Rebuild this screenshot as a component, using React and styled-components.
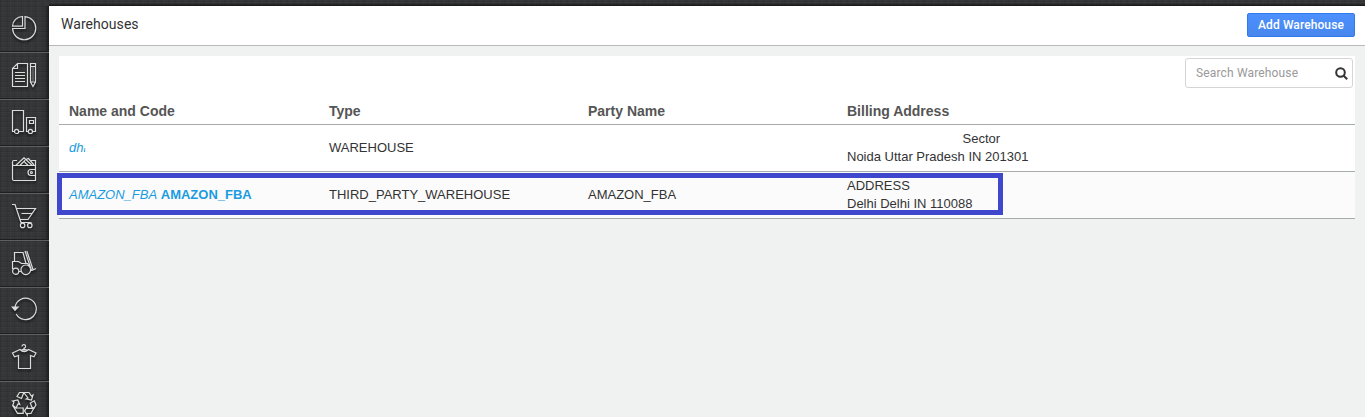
import React from 'react';
import styled, { createGlobalStyle } from 'styled-components';

const GlobalStyle = createGlobalStyle`
  * {
    box-sizing: border-box;
  }

  body {
    margin: 0;
    overflow: hidden;
    background: #f0f2f2;
    color: #333;
    font-family: 'Liberation Sans', Arial, sans-serif;
    font-size: 13px;
  }
`;

const Page = styled.div`
  display: flex;
  flex-direction: column;
  height: 100vh;
  background-color: #353637;
  background-image:
    repeating-linear-gradient(90deg, rgba(0, 0, 0, 0.07) 0 1px, transparent 1px 3px, rgba(255, 255, 255, 0.015) 3px 4px, transparent 4px 7px),
    repeating-linear-gradient(0deg, rgba(0, 0, 0, 0.07) 0 1px, transparent 1px 4px, rgba(255, 255, 255, 0.015) 4px 5px);
`;

const TopStrip = styled.div`
  flex: none;
  height: 6px;
  margin-left: 49px;
  background: linear-gradient(rgba(0, 0, 0, 0) 50%, rgba(0, 0, 0, 0.6));
`;

const Body = styled.div`
  display: flex;
  flex: 1;
  min-height: 0;
`;

const Sidebar = styled.nav`
  flex: none;
  width: 49px;
  overflow: hidden;
  box-shadow: inset -5px 0 4px -3px rgba(0, 0, 0, 0.55);
`;

const SideItem = styled.a`
  display: block;
  height: 47px;
  padding: 9px 0 0 11px;
  border-top: 1px solid ${({ $first }) => ($first ? 'transparent' : '#5e5f60')};
  border-bottom: 1px solid #1d1e1f;
  margin-top: ${({ $first }) => ($first ? '-1px' : '0')};
`;

const IconSvg = styled.svg`
  display: block;
  width: 26px;
  height: 26px;
  fill: none;
  stroke: #dcdcdc;
  stroke-width: 1.2;
  filter: drop-shadow(0 2px 1px rgba(0, 0, 0, 0.6));
`;

const Main = styled.main`
  display: flex;
  flex-direction: column;
  flex: 1;
  min-width: 0;
  background: #f0f2f2;
`;

const Header = styled.header`
  display: flex;
  align-items: center;
  justify-content: space-between;
  flex: none;
  height: 40px;
  padding: 0 10px 0 12px;
  background: #fff;
  border-bottom: 1px solid #b9b9b9;
`;

const Title = styled.h1`
  margin: 0 0 3px;
  font-family: Roboto, sans-serif;
  font-size: 14px;
  font-weight: 400;
  letter-spacing: 0.05px;
`;

const AddButton = styled.button`
  width: 108px;
  height: 24px;
  margin-bottom: 1px;
  padding: 0;
  border: 1px solid #3079ed;
  border-radius: 2px;
  background: linear-gradient(#4d90fe, #4787ed);
  color: #fff;
  font-family: Roboto, sans-serif;
  font-size: 12px;
  font-weight: 500;
  letter-spacing: 0.1px;
`;

const Panel = styled.section`
  margin: 10px 10px 0;
  background: #fff;
`;

const Toolbar = styled.div`
  display: flex;
  justify-content: flex-end;
  height: 42px;
  padding: 2px 2px 0 0;
`;

const SearchBox = styled.label`
  display: flex;
  align-items: center;
  justify-content: space-between;
  width: 168px;
  height: 30px;
  padding: 0 4px 0 10px;
  border: 1px solid #d5d5d5;
  border-radius: 3px;
  color: #999;
  font-family: Roboto, sans-serif;
  font-size: 12px;
  letter-spacing: 0.15px;
`;

const SearchSvg = styled.svg`
  width: 13px;
  height: 13px;
  fill: none;
  stroke: #333;
  stroke-width: 2;
`;

const Row = styled.div`
  display: grid;
  grid-template-columns: 260px 259px 259px 1fr;
  align-items: center;
  height: ${({ $head }) => ($head ? '27px' : '47px')};
  padding-left: 10px;
  border-bottom: 1px solid #a8abab;
  background: ${({ $alt }) => ($alt ? '#fbfbfb' : '#fff')};
  line-height: 18px;
`;

const HeadCell = styled.div`
  color: #555;
  font-size: 14px;
  font-weight: bold;
`;

const Cell = styled.div`
  white-space: pre;
`;

const AddressLine = styled.div`
  padding-left: ${({ $indent }) => $indent || 0}px;
`;

const Code = styled.a`
  color: #1a9be0;
  font-style: italic;
`;

const Name = styled.a`
  color: #1a9be0;
  font-weight: bold;
`;

const HalfLetter = styled.span`
  display: inline-block;
  clip-path: inset(9px 1px 0 0);
`;

const Highlighted = styled.div`
  position: relative;

  &::after {
    content: '';
    box-sizing: border-box;
    position: absolute;
    left: -2px;
    top: 1px;
    width: 946px;
    height: 42px;
    border: 5px solid #3f48cc;
  }
`;

const icons = [
  { name: 'dashboard', shape: (
    <>
      <path d="M14 1.6A11.6 11.6 0 1 1 1.6 13.5H14Z" />
      <path d="M11.5 1.5V11.2H1.5A10 10 0 0 1 11.5 1.5Z" />
    </>
  ) },
  { name: 'orders', shape: (
    <>
      <path d="M6.5 1.5H16.5V24.5H1.5V6.5ZM6.5 1.5V6.5H1.5M4 10.5H14M4 13.5H14M4 16.5H14M4 19.5H14" />
      <path d="M19.5 1.5H24.5V20L22 24.5L19.5 20ZM19.5 4.5H24.5M20 20H24" />
      <path d="M22 5V19" strokeWidth="0.5" />
    </>
  ) },
  { name: 'shipments', shape: (
    <>
      <path d="M3.5 22.5H1.5V1.5H12.5V22.5H7.7" />
      <circle cx="5.6" cy="22.4" r="2.1" />
      <path d="M17.3 22.5H15.5V8.5H24.5V22.5H21.5M18.5 11.5H22.5V14.5H18.5Z" />
      <circle cx="19.4" cy="22.4" r="2.1" />
    </>
  ) },
  { name: 'wallet', shape: (
    <>
      <path d="M6 4.5H3A1.5 1.5 0 0 0 1.5 6V23A1.5 1.5 0 0 0 3 24.5H24.5V9.5H3A1.5 1.5 0 0 1 1.5 7.5M20 4.5H24.5V9.5" />
      <path d="M5 9.2L13 1.7L21 9.2M9 9.2L14.2 4.2M13.5 6L17 9.2M15 3.5L17.5 2.5L23 9" />
      <path d="M24.5 13.5H20A3 3 0 0 0 20 19.5H24.5" />
      <circle cx="20.4" cy="16.5" r="1" />
    </>
  ) },
  { name: 'purchase', shape: (
    <>
      <path d="M1 1.5H4L10 19.5M5.3 5.5H24.5L17 16.5H9M10.5 10.5H21M9.5 19.5H20.5" />
      <circle cx="11.6" cy="22.4" r="2.2" />
      <circle cx="18.8" cy="22.4" r="2.2" />
    </>
  ) },
  { name: 'inflow', shape: (
    <>
      <path d="M3.5 11.5V2.5H12L15 13.5M1.5 19V11.5H7.5L10.5 13.5H16.5L18 16M14 1L20.5 20.5M15.8 1L22 19.5M7.5 21.5H10M19.5 20.5H21L25 18.5" />
      <circle cx="4.7" cy="21.2" r="3.1" />
      <circle cx="14.8" cy="19.8" r="4.8" />
    </>
  ) },
  { name: 'returns', shape: (
    <>
      <path d="M4 10.5A10.7 10.7 0 1 1 5.2 17" />
      <path d="M1.3 10H7L4 13.3Z" fill="#dcdcdc" />
    </>
  ) },
  { name: 'products', shape: (
    <>
      <path d="M9 5.5L1.5 9L3.5 12.7L7.5 11.5V24.5H19.5V11.5L23 12.7L25 9L17.5 5.5Q13 9.5 9 5.5Z" />
      <path d="M11 2.5A1.8 1.8 0 1 1 13 4.2V6.7M10 6.5L13 5L16.5 6.5" />
    </>
  ) },
  { name: 'reconcile', shape: (
    <>
      <path d="M8.5 1.5H12.8L10.5 7.5L6 5.5Z" />
      <path d="M12.8 1.5H18L20.3 5L22 4L20.5 9L15.3 8L17 7Z" />
      <path d="M1.5 10L6.8 9L8.7 13.6L7 13L5 17L1.7 14.5L3 11Z" />
      <path d="M1.7 14.5L5 17H12.2V22.3H6.5Z" />
      <path d="M19.3 12L23.3 9.8L25 14L22.8 17.3L20.8 16Z" />
      <path d="M22.8 17.3L20 22.5H16.3V24.2L13.5 19.8L16.3 15.8V17.3Z" />
    </>
  ) },
];

const WarehouseTable = () => (
  <>
    <Row $head>
      <HeadCell>Name and Code</HeadCell>
      <HeadCell>Type</HeadCell>
      <HeadCell>Party Name</HeadCell>
      <HeadCell>Billing Address</HeadCell>
    </Row>
    <Row>
      <Cell><Code>dh<HalfLetter>i</HalfLetter></Code></Cell>
      <Cell>WAREHOUSE</Cell>
      <Cell />
      <Cell>
        <AddressLine $indent={115.5}>Sector</AddressLine>
        <AddressLine>Noida Uttar Pradesh IN 201301</AddressLine>
      </Cell>
    </Row>
    <Highlighted>
      <Row $alt>
        <Cell><Code>AMAZON_FBA</Code> <Name>AMAZON_FBA</Name></Cell>
        <Cell>THIRD_PARTY_WAREHOUSE</Cell>
        <Cell>AMAZON_FBA</Cell>
        <Cell>
          <AddressLine>ADDRESS</AddressLine>
          <AddressLine>Delhi Delhi IN 110088</AddressLine>
        </Cell>
      </Row>
    </Highlighted>
  </>
);

export default function App() {
  return (
    <>
      <GlobalStyle />
      <Page>
        <TopStrip />
        <Body>
          <Sidebar>
            {icons.map(({ name, shape }, i) => (
              <SideItem key={name} $first={i === 0}>
                <IconSvg viewBox="0 0 26 26">{shape}</IconSvg>
              </SideItem>
            ))}
          </Sidebar>
          <Main>
            <Header>
              <Title>Warehouses</Title>
              <AddButton>Add Warehouse</AddButton>
            </Header>
            <Panel>
              <Toolbar>
                <SearchBox>
                  Search Warehouse
                  <SearchSvg viewBox="0 0 13 13">
                    <circle cx="5.5" cy="5.5" r="4.3" />
                    <path d="M8.7 8.7L12.2 12.2" />
                  </SearchSvg>
                </SearchBox>
              </Toolbar>
              <WarehouseTable />
            </Panel>
          </Main>
        </Body>
      </Page>
    </>
  );
}
